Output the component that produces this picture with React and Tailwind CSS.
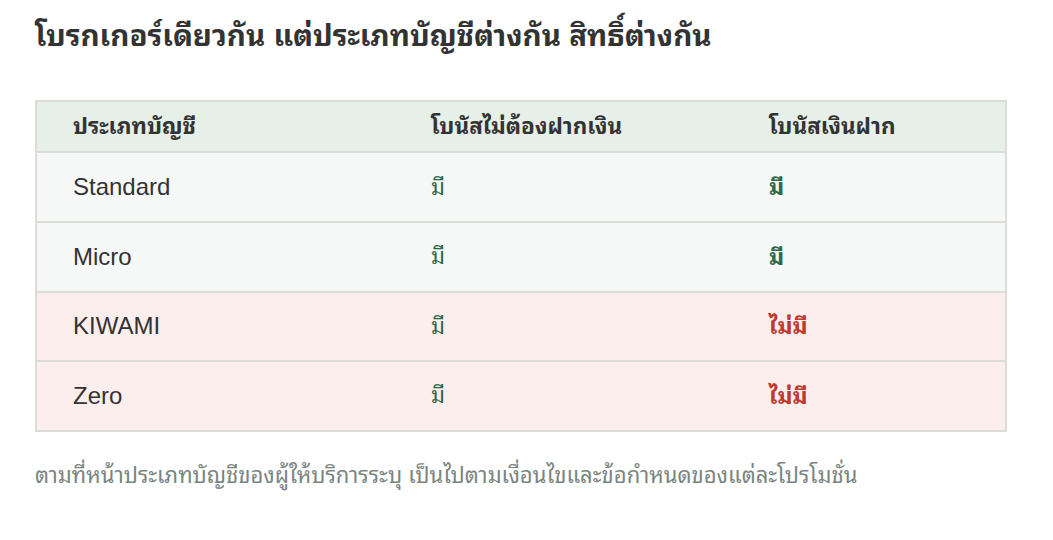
export default function App() {
  const rows = [
    { name: "Standard", a: "มี", b: "มี", red: false },
    { name: "Micro", a: "มี", b: "มี", red: false },
    { name: "KIWAMI", a: "มี", b: "ไม่มี", red: true },
    { name: "Zero", a: "มี", b: "ไม่มี", red: true },
  ];
  return (
    <div className="w-[1053px] h-[540px] bg-white px-[35px] pt-[16px] font-['Liberation_Sans','Noto_Sans_Thai_Looped',sans-serif]">
      <h1 className="text-[29.5px] font-bold text-[#333333] leading-[40px]">โบรกเกอร์เดียวกัน แต่ประเภทบัญชีต่างกัน สิทธิ์ต่างกัน</h1>
      <table className="mt-[44px] w-[972px] border-collapse border-2 border-[#dcddd8]">
        <thead>
          <tr className="bg-[#e6efe8] h-[51px]">
            <th className="text-left font-bold text-[22.5px] text-[#333333] pl-[36px] w-[359px] border-b-2 border-[#dcddd8]">ประเภทบัญชี</th>
            <th className="text-left font-bold text-[22.5px] text-[#333333] pl-[36px] w-[338px] border-b-2 border-[#dcddd8]">โบนัสไม่ต้องฝากเงิน</th>
            <th className="text-left font-bold text-[22.5px] text-[#333333] pl-[36px] border-b-2 border-[#dcddd8]">โบนัสเงินฝาก</th>
          </tr>
        </thead>
        <tbody>
          {rows.map((r, i) => (
            <tr key={r.name} className={`${i === 0 ? "h-[70px]" : "h-[69.5px]"} ${r.red ? "bg-[#fdeeee]" : "bg-[#f6f8f7]"}`}>
              <td className="pl-[36px] text-[24px] text-[#333333] border-b-2 border-[#dcddd8]">{r.name}</td>
              <td className="pl-[36px] text-[22px] text-[#2a6a4c] border-b-2 border-[#dcddd8]">{r.a}</td>
              <td className={`pl-[36px] text-[23px] font-bold border-b-2 border-[#dcddd8] ${r.red ? "text-[#c0392b]" : "text-[#2a6a4c]"}`}>{r.b}</td>
            </tr>
          ))}
        </tbody>
      </table>
      <p className="mt-[29px] text-[22px] leading-[30px] text-[#7a8580]">ตามที่หน้าประเภทบัญชีของผู้ให้บริการระบุ เป็นไปตามเงื่อนไขและข้อกำหนดของแต่ละโปรโมชั่น</p>
    </div>
  );
}
